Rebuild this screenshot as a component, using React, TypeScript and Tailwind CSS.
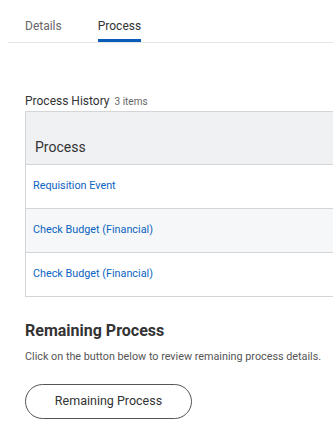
import { useState } from 'react';

const rows = ['Requisition Event', 'Check Budget (Financial)', 'Check Budget (Financial)'];

export default function App() {
  const [tab, setTab] = useState('Process');

  return (
    <div className="min-h-[437px] w-[333px] overflow-hidden bg-white font-['Roboto',sans-serif] text-[#333]">
      <div className="ml-2 flex h-[43px] items-stretch gap-[36px] border-b border-[#e3e4e6] pl-[17px]">
        {['Details', 'Process'].map((t) => (
          <button
            key={t}
            onClick={() => setTab(t)}
            className={`relative h-[42px] self-start pt-[10px] text-left text-[12px] leading-4 ${
              tab === t ? 'text-[#333]' : 'text-[#666]'
            }`}
          >
            {t}
            {tab === t && <span className="absolute bottom-0 left-0 right-0 h-[3px] bg-[#0b5cb9]" />}
          </button>
        ))}
      </div>

      <div className="pl-[25px] pt-[50px]">
        <div className="flex items-baseline gap-[5px]">
          <span className="text-[12px] leading-4 text-[#333]">Process History</span>
          <span className="text-[10px] text-[#666]">3 items</span>
        </div>

        <div className="mt-[2px] border-y border-l border-[#d4d5d7]">
          <div className="flex h-[52px] items-end bg-[#f0f1f2] pb-[7px] pl-[9px] text-[14px] leading-5 text-[#333]">
            Process
          </div>
          {rows.map((r, i) => (
            <div
              key={i}
              className={`flex h-[44px] items-center border-t border-[#d4d5d7] pl-[7px] text-[10.8px] text-[#0b64c2] ${
                i === 1 ? 'bg-[#f6f7f8]' : 'bg-white'
              }`}
            >
              {r}
            </div>
          ))}
        </div>

        <h2 className="mt-[24px] text-[16px] font-bold leading-5 text-[#333]">Remaining Process</h2>
        <p className="mt-[8px] text-[10.8px] leading-4 text-[#555]">
          Click on the button below to review remaining process details.
        </p>
        <button className="mt-[19px] flex h-[35px] w-[167px] items-center justify-center rounded-full border border-[#555] text-[12.5px] text-[#333]">
          Remaining Process
        </button>
      </div>
    </div>
  );
}
